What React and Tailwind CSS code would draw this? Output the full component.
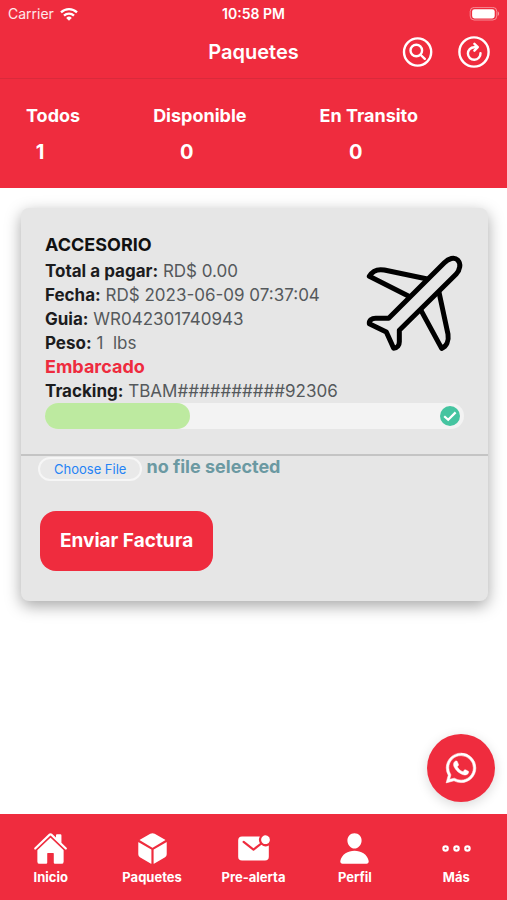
import React, { useState } from 'react';
import { IoHome, IoCube, IoMailUnread, IoPerson, IoEllipsisHorizontalOutline, IoLogoWhatsapp } from 'react-icons/io5';

const paquete = {
  nombre: 'ACCESORIO',
  total: 'RD$ 0.00',
  fecha: 'RD$ 2023-06-09 07:37:04',
  guia: 'WR042301740943',
  peso: '1\u00a0 lbs',
  estado: 'Embarcado',
  tracking: 'TBAM##########92306',
  progreso: 34.5,
};

const resumen = [
  { label: 'Todos', count: 1 },
  { label: 'Disponible', count: 0 },
  { label: 'En Transito', count: 0 },
];

const menu = [
  { label: 'Inicio', icon: IoHome },
  { label: 'Paquetes', icon: IoCube },
  { label: 'Pre-alerta', icon: IoMailUnread },
  { label: 'Perfil', icon: IoPerson },
  { label: 'Más', icon: IoEllipsisHorizontalOutline },
];

function StatusBar() {
  return (
    <div className="grid grid-cols-3 items-center h-7 px-2 text-sm">
      <div className="flex items-center gap-1.5 text-white/90">
        <span>Carrier</span>
        <svg viewBox="0 0 18 14" className="w-[18px] h-3.5" fill="none" stroke="white" strokeWidth="2.3">
          <path d="M1 5.4a11.5 11.5 0 0 1 16 0" />
          <path d="M4 8.6a7.2 7.2 0 0 1 10 0" />
          <path d="M9 13.8 6.2 10.9a4 4 0 0 1 5.6 0Z" fill="white" stroke="none" />
        </svg>
      </div>
      <span className="text-center font-semibold">10:58 PM</span>
      <svg viewBox="0 0 31 15" className="w-[31px] h-[15px] justify-self-end" fill="white">
        <rect x="2.2" y="0.4" width="26.6" height="12.6" rx="4" fill="none" stroke="white" strokeOpacity="0.45" />
        <rect x="4.1" y="2.2" width="22.6" height="9.2" rx="2.4" />
        <path d="M29.8 4.6c1.6.6 1.6 3.8 0 4.4z" opacity="0.5" />
      </svg>
    </div>
  );
}

function Avion() {
  return (
    <svg
      viewBox="330 175 300 300"
      className="size-[100px] shrink-0"
      fill="none"
      stroke="black"
      strokeWidth="15"
      strokeLinejoin="round"
      strokeLinecap="round"
    >
      <path d="M404 371 571 204C584 191 601 186 611 196C622 207 618 226 606 239L436 407V441C436 452 430 460 419 461L397 412 346 387C345 377 353 371 365 371Z" />
      <path d="M520 253 391 226C369 222 354 231 346 245L463 304" />
      <path d="M555 293 582 419C585 439 577 455 563 461L501 347" />
    </svg>
  );
}

function Dato({ label, children }) {
  return (
    <p>
      <strong className="font-bold text-[#1c1c1e]">{label}:</strong> {children}
    </p>
  );
}

export default function App() {
  const [archivo, setArchivo] = useState('');

  return (
    <div className="min-h-screen flex flex-col bg-white font-[Inter,sans-serif]">
      <header className="bg-[#ef2c3e] text-white">
        <StatusBar />

        <div className="grid grid-cols-[1fr_auto_1fr] items-center h-[51px] px-[17px] pb-0.5 border-b border-[#d92a3b]">
          <h1 className="col-start-2 text-xl font-semibold">Paquetes</h1>
          <div className="flex justify-end gap-6">
            <button type="button" aria-label="Buscar">
              <svg viewBox="0 0 32 32" className="size-8" fill="none" stroke="white" strokeWidth="2.4" strokeLinecap="round">
                <circle cx="15.6" cy="16" r="13.6" />
                <circle cx="14.3" cy="14.5" r="5.8" />
                <path d="m18.8 19 4 3.8" />
              </svg>
            </button>
            <button type="button" aria-label="Actualizar">
              <svg viewBox="0 0 32 32" className="size-8" fill="none" stroke="white" strokeWidth="2.4" strokeLinecap="round" strokeLinejoin="round">
                <circle cx="16" cy="16" r="14.6" />
                <path d="M19 11.2h-2.8a6.3 6.3 0 1 0 6.3 6" />
                <path d="m16.4 7.8 3.4 3.4-3.4 3.5" />
              </svg>
            </button>
          </div>
        </div>

        {/* Resumen por estado */}
        <div className="flex gap-[73px] px-[26px] pt-[25px] pb-5 text-lg font-bold">
          {resumen.map((item) => (
            <button key={item.label} type="button" className="flex flex-col gap-2 whitespace-nowrap">
              <span className="leading-6">{item.label}</span>
              <span className="w-full pr-[26px] text-center text-xl leading-8">{item.count}</span>
            </button>
          ))}
        </div>
      </header>

      <main className="flex-1 pl-[21px] pr-[19px] pt-5">
        <section className="rounded-lg bg-[#e6e6e6] shadow-[0_5px_16px_rgba(0,0,0,0.35)]">
          <div className="px-6 pt-[25px] pb-[25px] border-b-2 border-[#c4c4c4]">
            <div className="flex justify-between">
              <div className="text-[17px] leading-6 text-[#55595c] whitespace-nowrap">
                <h2 className="mb-0.5 text-lg leading-6 font-bold text-[#111]">{paquete.nombre}</h2>
                <Dato label="Total a pagar">{paquete.total}</Dato>
                <Dato label="Fecha">{paquete.fecha}</Dato>
                <Dato label="Guia">{paquete.guia}</Dato>
                <Dato label="Peso">{paquete.peso}</Dato>
                <p className="text-lg leading-6 font-bold text-[#ee2b3e]">{paquete.estado}</p>
                <Dato label="Tracking">{paquete.tracking}</Dato>
              </div>
              <div className="pt-5">
                <Avion />
              </div>
            </div>

            <div className="flex items-center h-[26px] rounded-full bg-[#f3f3f3]">
              <div className="h-full rounded-full bg-[#bdeaa0]" style={{ width: `${paquete.progreso}%` }} />
              <svg viewBox="0 0 20 20" className="size-5 ml-auto mr-1" fill="none">
                <circle cx="10" cy="10" r="10" fill="#45c4a0" />
                <path d="m4.2 10.2 4 3.6 7.4-7.4" stroke="white" strokeWidth="2.2" />
              </svg>
            </div>
          </div>

          {/* Factura */}
          <form className="px-[17px] pb-[30px]" onSubmit={(e) => e.preventDefault()}>
            <label className="flex items-center gap-1 pt-px cursor-pointer">
              <input
                type="file"
                className="sr-only"
                onChange={(e) => setArchivo(e.target.files[0]?.name ?? '')}
              />
              <span className="rounded-full border-2 border-[#f6f6f6] bg-[#e9e9e9] px-3.5 text-[13px] leading-5 text-[#2583f5]">
                Choose File
              </span>
              <span className="pb-1 text-lg leading-5 font-bold text-[#6b99a2]">{archivo || 'no file selected'}</span>
            </label>
            <button type="submit" className="mt-[30px] ml-0.5 h-[60px] rounded-2xl bg-[#ef2c3e] px-5 text-[19px] font-bold text-white">
              Enviar Factura
            </button>
          </form>
        </section>
      </main>

      <a
        href="#whatsapp"
        aria-label="WhatsApp"
        className="fixed right-3 bottom-[98px] flex size-[68px] items-center justify-center rounded-full bg-[#ef2c3e] text-white shadow-[0_3px_12px_rgba(0,0,0,0.15)]"
      >
        <IoLogoWhatsapp className="size-[34px]" stroke="white" strokeWidth="8" />
      </a>

      <nav className="grid grid-cols-5 h-[86px] bg-[#ef2c3e] pt-[17px] text-white">
        {menu.map(({ label, icon: Icon }) => (
          <a key={label} href="#menu" className="flex flex-col items-center gap-[3px]">
            <Icon className="size-[35px]" />
            <span className="text-[13px] leading-4 font-bold">{label}</span>
          </a>
        ))}
      </nav>
    </div>
  );
}
